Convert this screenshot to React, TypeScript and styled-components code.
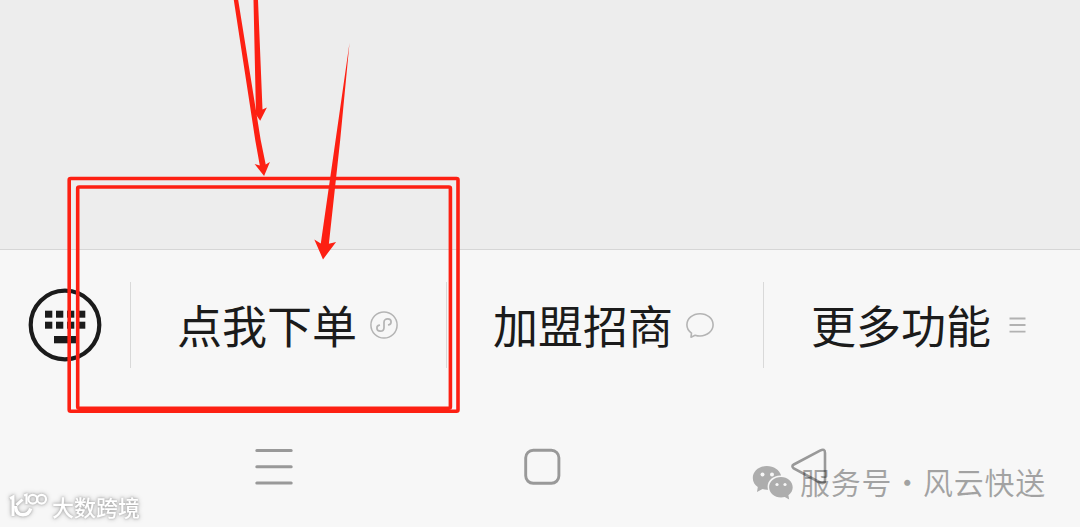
import type { ReactNode } from 'react';
import styled, { createGlobalStyle } from 'styled-components';

interface IMenu {
  label: string;
  width: number;
  offset: number;
  gap: number;
  icon: ReactNode;
}

const ANNOTATION_COLOR = '#fd2013';

const KeyboardIcon = () => (
  <svg width="74" height="74" viewBox="0 0 74 74">
    <circle cx="37" cy="37" r="34.3" fill="none" stroke="#1b1b1b" strokeWidth="4.2" />
    <g fill="#1b1b1b">
      {[17, 28, 39, 50].map((x) => (
        <g key={x}>
          <rect x={x} y="22.7" width="7.3" height="7" />
          <rect x={x} y="33.7" width="7.3" height="7" />
        </g>
      ))}
      <rect x="26" y="48" width="22" height="7.3" />
    </g>
  </svg>
);

const MiniProgramIcon = () => (
  <svg width="28" height="28" viewBox="0 0 28 28" fill="none" stroke="#b4b4b4">
    <circle cx="14" cy="14" r="13.1" strokeWidth="1.5" />
    <path
      d="M9.300 14.200C7.700 14.500 6.900 15.600 6.900 17c0 1.900 1.500 3.200 3.400 3.200 2.200 0 3.700-1.400 3.700-3.400v-5.600c0-2 1.500-3.400 3.700-3.400 1.900 0 3.400 1.300 3.400 3.200 0 1.400-.8 2.500-2.400 2.800"
      strokeWidth="1.7"
      strokeLinecap="round"
    />
  </svg>
);

const BubbleIcon = () => (
  <svg width="28" height="28" viewBox="0 0 28 28" fill="none" stroke="#b4b4b4" strokeWidth="1.6">
    <path
      d="M14 2.700c7.300 0 13.100 4.900 13.100 11.100S21.300 25 14 25c-1.700 0-3.400-.3-4.900-.8L5 26.200l.5-4.100C2.600 20.100.9 17.200.9 13.800.9 7.600 6.700 2.700 14 2.700z"
      strokeLinejoin="round"
    />
  </svg>
);

const ListIcon = () => (
  <svg width="17" height="20" viewBox="0 0 17 20" stroke="#b2b2b2" strokeWidth="1.9">
    <path d="M.5 3.500h16M.5 10h16M.5 16.600h16" />
  </svg>
);

const MENUS: IMenu[] = [
  { label: '点我下单', width: 316, offset: 46, gap: 13, icon: <MiniProgramIcon /> },
  { label: '加盟招商', width: 317, offset: 46, gap: 13, icon: <BubbleIcon /> },
  { label: '更多功能', width: 317, offset: 47, gap: 18, icon: <ListIcon /> },
];

const Annotations = () => (
  <AnnotationLayer viewBox="0 0 1080 527" fill={ANNOTATION_COLOR}>
    <g fill="none" stroke={ANNOTATION_COLOR} strokeWidth="3.6">
      <rect x="69.200" y="178.500" width="388.800" height="232.800" rx="1.500" />
      <rect x="77.700" y="187" width="372.700" height="221.300" rx="1.500" />
    </g>
    <path d="M233.800 0h4.400L260.700 140l5 24.500 4.200-2.500-5.800 14-9.500-12 5.200 1.500-4.500-25z" />
    <path d="M253.500 0h4.500l4.500 109.500 4.400-2-6.700 13.200-7.500-10.700 3.200.5z" />
    <path d="M349.500 43l-9.300 97-11.300 103.700 7.200-1.800-13.100 17.500-8.700-20 6.500 4.100L335.600 140z" />
  </AnnotationLayer>
);

const WechatIcon = () => (
  <svg width="42" height="35" viewBox="0 0 42 35">
    <path
      d="M14.800 1C6.900 1 .8 6.200.8 12.900c0 3.800 1.900 7 5 9.200L5 27l5.500-2.900c1.400.4 2.800.6 4.300.6h1.300c-.3-.9-.5-1.900-.5-2.900 0-6.200 5.600-11.200 12.700-11.200h.8C27.600 5 21.800 1 14.800 1z"
      fill="#adadad"
    />
    <path
      d="M29 12c-6.600 0-11.900 4.500-11.900 10.300S22.400 32.500 29 32.500c1.300 0 2.600-.2 3.800-.5l4.400 2.500-.8-4.300c2.800-1.900 4.300-4.700 4.300-7.900C40.700 16.500 35.500 12 29 12z"
      fill="#adadad"
    />
    <g fill="#f7f7f7">
      <circle cx="10.500" cy="9.500" r="2" />
      <circle cx="20" cy="9.500" r="2" />
      <circle cx="25" cy="19.500" r="1.600" />
      <circle cx="33" cy="19.500" r="1.600" />
    </g>
  </svg>
);

const BrandLogo = () => (
  <svg width="40" height="28" viewBox="0 0 40 28" fill="none" stroke="#fff">
    <path d="M2 6.500L5 5v19M14.500 7.500L8.500 13" strokeWidth="3" />
    <path d="M7.500 14c.3 5.800 3 8.800 7.300 8.800 4 0 6.800-2.400 7.900-6.300" strokeWidth="3.400" />
    <path d="M16 3.500l2.500-1v9.500" strokeWidth="2.200" />
    <circle cx="24.800" cy="7.200" r="4.400" strokeWidth="2.200" />
    <circle cx="33.600" cy="7.200" r="4.400" strokeWidth="2.200" />
  </svg>
);

const App = () => {
  return (
    <>
      <GlobalStyle />
      <Screen>
        <ChatArea />
        <MenuBar>
          <KeyboardButton>
            <KeyboardIcon />
          </KeyboardButton>
          {MENUS.map(({ label, width, offset, gap, icon }) => (
            <MenuItem key={label} $width={width} $offset={offset} $gap={gap}>
              <MenuLabel>{label}</MenuLabel>
              {icon}
            </MenuItem>
          ))}
        </MenuBar>
        <SystemNav>
          <svg width="38" height="38" viewBox="0 0 38 38" stroke="#999" strokeWidth="3">
            <path d="M1.800 2.500h34.400M1.800 18.800h34.400M1.800 35.100h34.400" strokeLinecap="round" />
          </svg>
          <svg width="38" height="38" viewBox="0 0 38 38" fill="none" stroke="#999" strokeWidth="2.900">
            <rect x="2.700" y="2.300" width="33.200" height="33" rx="7.500" />
          </svg>
          <svg width="38" height="38" viewBox="0 0 38 38" fill="none" stroke="#999" strokeWidth="2.600">
            <path d="M3.800 16.500L30 2.700Q35 0 35 5v27Q35 36.500 30 34.500L3.800 20.500Q1 18 3.800 16.500z" />
          </svg>
        </SystemNav>
        <Annotations />
        <AccountMark>
          <WechatIcon />
          <AccountName>
            <span>服务号</span>
            <Dot>·</Dot>
            <span>风云快送</span>
          </AccountName>
        </AccountMark>
        <BrandMark>
          <BrandLogo />
          <span>大数跨境</span>
        </BrandMark>
      </Screen>
    </>
  );
};

const GlobalStyle = createGlobalStyle`
  body {
    margin: 0;
    overflow: hidden;
    font-family: 'Noto Sans CJK SC', 'Noto Sans', sans-serif;
  }
  svg {
    display: block;
    flex-shrink: 0;
  }
`;

const Screen = styled.div`
  position: relative;
  display: flex;
  flex-direction: column;
  width: 1080px;
  height: 527px;
  overflow: hidden;
  background-color: #f7f7f7;
`;

const ChatArea = styled.main`
  flex: none;
  height: 249px;
  background-color: #ededed;
`;

const MenuBar = styled.nav`
  display: flex;
  flex: none;
  align-items: center;
  box-sizing: border-box;
  height: 151px;
  border-top: 1px solid #d6d6d6;
`;

const KeyboardButton = styled.div`
  display: flex;
  align-items: center;
  box-sizing: border-box;
  width: 130px;
  padding-left: 28px;
`;

const MenuItem = styled.div<{ $width: number; $offset: number; $gap: number }>`
  display: flex;
  align-items: center;
  gap: ${({ $gap }) => $gap}px;
  box-sizing: border-box;
  width: ${({ $width }) => $width}px;
  height: 86px;
  padding-left: ${({ $offset }) => $offset}px;
  border-left: 1px solid #d9d9d9;
`;

const MenuLabel = styled.span`
  color: #1b1b1b;
  font-size: 45px;
  line-height: 86px;
  white-space: nowrap;
`;

const SystemNav = styled.footer`
  display: flex;
  flex: 1;
  justify-content: space-between;
  align-items: center;
  padding: 7px 252px 0 255px;
`;

const AnnotationLayer = styled.svg`
  position: absolute;
  inset: 0;
  width: 1080px;
  height: 527px;
`;

const AccountMark = styled.div`
  position: absolute;
  left: 752px;
  top: 465px;
  display: flex;
  gap: 6px;
`;

const AccountName = styled.div`
  display: flex;
  color: rgba(0, 0, 0, 0.34);
  font-size: 30px;
  line-height: 32px;
  letter-spacing: 0.7px;
  white-space: nowrap;
`;

const Dot = styled.span`
  width: 31px;
  text-align: center;
`;

const BrandMark = styled.div`
  position: absolute;
  left: 8px;
  top: 490px;
  display: flex;
  align-items: center;
  gap: 4px;
  color: #fff;
  font-size: 22px;
  font-weight: 500;
  line-height: 32px;
  filter: drop-shadow(0 0 1px #aaa) drop-shadow(0 0 2px #bbb);
`;

export default App;
